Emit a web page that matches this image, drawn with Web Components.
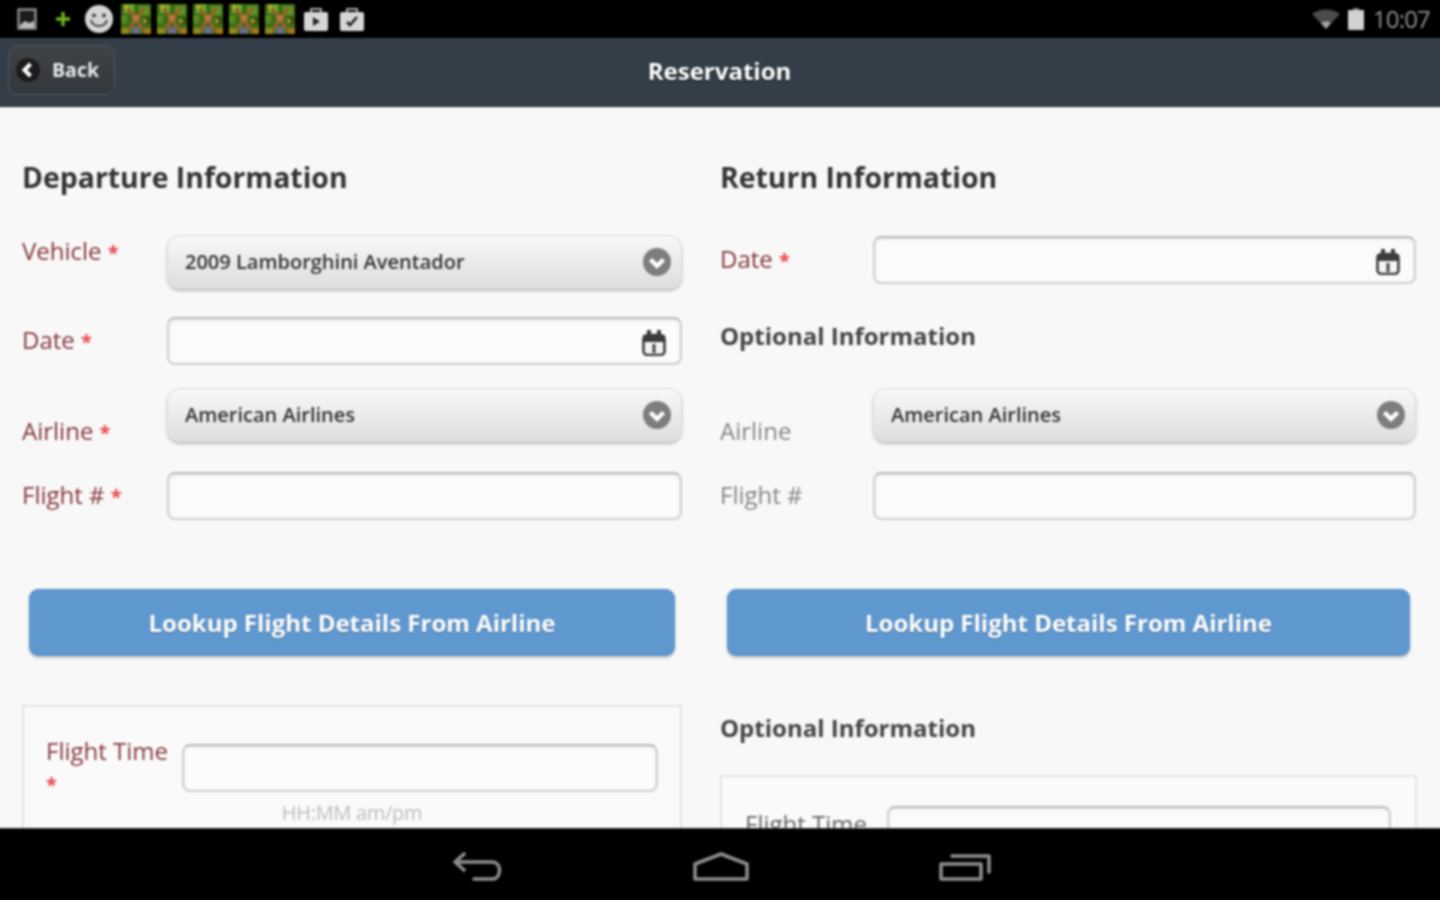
<!DOCTYPE html>
<html>
<head>
<meta charset="utf-8">
<title>Reservation</title>
<style>
  html, body { margin: 0; padding: 0; height: 100%; background: #000; }
  body { width: 1440px; height: 900px; overflow: hidden; font-family: "Open Sans", "Liberation Sans", sans-serif; }
  /* wider than the window so the blur has no dark edge at the sides */
  #app { display: flex; flex-direction: column; width: 1460px; height: 900px; margin-left: -10px; filter: blur(0.8px); }
</style>
</head>
<body>
<div id="app">
  <status-bar></status-bar>
  <title-bar>Reservation</title-bar>
  <reservation-page>
    <div slot="left">
      <section-heading>Departure Information</section-heading>
      <form-row label="Vehicle" required style="margin-top:38px" label-top="0" cols="145"><select-box>2009 Lamborghini Aventador</select-box></form-row>
      <form-row label="Date" required style="margin-top:28px" label-top="7" cols="145"><text-field calendar></text-field></form-row>
      <form-row label="Airline" required style="margin-top:23px" label-top="27" cols="145"><select-box>American Airlines</select-box></form-row>
      <form-row label="Flight #" required style="margin-top:23px" label-top="7" cols="145"><text-field></text-field></form-row>
      <lookup-button style="margin:69px 7px 0">Lookup Flight Details From Airline</lookup-button>
      <time-box required style="margin-top:49px" pad="37"></time-box>
    </div>
    <div slot="right">
      <section-heading>Return Information</section-heading>
      <form-row label="Date" required style="margin:39px 1px 0 0" label-top="7" cols="153"><text-field calendar></text-field></form-row>
      <sub-heading style="margin-top:35px">Optional Information</sub-heading>
      <form-row label="Airline" style="margin:35px 1px 0 0" label-top="27" cols="153"><select-box>American Airlines</select-box></form-row>
      <form-row label="Flight #" style="margin:25px 1px 0 0" label-top="7" cols="153"><text-field></text-field></form-row>
      <lookup-button style="margin:69px 7px 0">Lookup Flight Details From Airline</lookup-button>
      <sub-heading style="margin-top:55px">Optional Information</sub-heading>
      <time-box style="margin-top:30px" pad="29"></time-box>
    </div>
  </reservation-page>
  <nav-bar></nav-bar>
</div>

<script>
class StatusThumb extends HTMLElement {
  constructor() {
    super();
    this.attachShadow({mode: "open"}).innerHTML = `
      <style>:host { display: block; width: 30px; height: 30px; } svg { display: block; }</style>
      <svg width="30" height="30" viewBox="0 0 30 30">
        <rect width="30" height="30" fill="#3f6e18"/>
        <rect x="3" y="0" width="10" height="9" fill="#6ea52a"/>
        <rect x="18" y="2" width="10" height="9" fill="#5e9424"/>
        <rect x="0" y="11" width="6" height="8" fill="#568a20"/>
        <rect x="24" y="13" width="6" height="7" fill="#2f5412"/>
        <rect x="0" y="24" width="8" height="6" fill="#8f8a1c"/>
        <rect x="23" y="24" width="7" height="6" fill="#a3761c"/>
        <path d="M7 5 L15 15 L24 4 M15 15 L8 26 M15 15 L22 26" stroke="#94602c" stroke-width="3.5" fill="none"/>
        <rect x="11" y="23" width="8" height="7" fill="#6d6a84"/>
        <circle cx="15" cy="14" r="3.5" fill="#b8743c"/>
        <circle cx="5" cy="3" r="2" fill="#c9a82c"/>
        <circle cx="24" cy="17" r="2" fill="#c98a24"/>
      </svg>`;
  }
}
customElements.define("status-thumb", StatusThumb);

class StatusBar extends HTMLElement {
  constructor() {
    super();
    this.attachShadow({mode: "open"}).innerHTML = `
      <style>
        :host { display: flex; align-items: center; height: 38px; background: #000; padding-left: 27px; padding-right: 20px; flex: none; }
        svg { display: block; flex: none; }
        .thumbs { display: flex; gap: 6px; margin-left: 8px; }
        .right { margin-left: auto; display: flex; align-items: center; color: #8f8f8f; font-size: 24px; letter-spacing: -0.8px; }
        .right span { margin-left: 9px; margin-top: -1px; }
      </style>
      <svg width="20" height="22" viewBox="0 0 20 22"><rect x="1.5" y="1.5" width="17" height="19" fill="#1c1c1c" stroke="#8f8f8f" stroke-width="2.4"/><path d="M3 17 L8 13 L12 15 L17 13 L17 20 L3 20 Z" fill="#bbb"/></svg>
      <svg style="margin-left:18px" width="16" height="16" viewBox="0 0 16 16"><path d="M8 1 V15 M1 8 H15" stroke="#6fb018" stroke-width="3.4"/></svg>
      <svg style="margin-left:14px" width="28" height="28" viewBox="0 0 28 28"><circle cx="14" cy="14" r="14" fill="#d4d4d4"/><circle cx="9" cy="10.5" r="2" fill="#444"/><circle cx="19" cy="10.5" r="2" fill="#444"/><path d="M6 15 C8 23 20 23 22 15" stroke="#444" stroke-width="2" fill="none"/></svg>
      <div class="thumbs"><status-thumb></status-thumb><status-thumb></status-thumb><status-thumb></status-thumb><status-thumb></status-thumb><status-thumb></status-thumb></div>
      <svg style="margin-left:9px" width="24" height="24" viewBox="0 0 24 24"><path d="M7 6 V2 H17 V6" stroke="#aaa" stroke-width="2" fill="none"/><rect y="5" width="24" height="19" rx="2" fill="#d6d6d6"/><path d="M9 10 L16 14.5 L9 19 Z" fill="#222"/></svg>
      <svg style="margin-left:12px" width="24" height="24" viewBox="0 0 24 24"><path d="M7 6 V2 H17 V6" stroke="#aaa" stroke-width="2" fill="none"/><rect y="5" width="24" height="19" rx="2" fill="#d6d6d6"/><path d="M7 15 L10 18 L17 10" stroke="#222" stroke-width="2.6" fill="none"/></svg>
      <div class="right">
        <svg width="28" height="20" viewBox="0 0 28 20"><path d="M0 5 C8 -1 20 -1 28 5 L14 20 Z" fill="#4a4a4a"/><path d="M9 14 C12 12 16 12 19 14 L14 20 Z" fill="#a5a5a5"/></svg>
        <svg style="margin-left:8px" width="16" height="22" viewBox="0 0 16 22"><rect x="5" y="0" width="6" height="3" fill="#777"/><rect y="2" width="16" height="20" rx="1" fill="#d2d2d2"/></svg>
        <span>10:07</span>
      </div>`;
  }
}
customElements.define("status-bar", StatusBar);

class TitleBar extends HTMLElement {
  constructor() {
    super();
    this.attachShadow({mode: "open"}).innerHTML = `
      <style>
        :host { display: grid; grid-template-columns: 1fr auto 1fr; align-items: center; height: 69px; flex: none; background: #333e48; color: #fff; border-bottom: 1px solid #222; box-sizing: border-box; padding: 0 10px 0 18px; }
        .back { justify-self: start; display: flex; align-items: center; width: 107px; height: 50px; box-sizing: border-box; margin-top: -5px; padding-left: 7px; gap: 12px; border-radius: 10px; background: linear-gradient(#3f4347, #34383c); border: 1px solid #50565e; font-size: 19.5px; font-weight: 700; color: #e8e8e8; }
        .back svg { display: block; }
        .title { font-size: 24px; font-weight: 700; text-shadow: 0 1px 1px #000; margin-left: -9px; margin-top: -4px; }
      </style>
      <div class="back">
        <svg width="24" height="24" viewBox="0 0 24 24"><circle cx="12" cy="12" r="12" fill="#1b1b1b"/><path d="M14.5 6 L8.5 12 L14.5 18" stroke="#fff" stroke-width="4" fill="none"/></svg>
        <span>Back</span>
      </div>
      <div class="title"><slot></slot></div>`;
  }
}
customElements.define("title-bar", TitleBar);

class ReservationPage extends HTMLElement {
  constructor() {
    super();
    this.attachShadow({mode: "open"}).innerHTML = `
      <style>
        :host { display: grid; grid-template-columns: 660px 697px; column-gap: 38px; padding: 50px 33px 0 32px; flex: 1; min-height: 0; overflow: hidden; background: #f8f8f8; }
      </style>
      <slot name="left"></slot>
      <slot name="right"></slot>`;
  }
}
customElements.define("reservation-page", ReservationPage);

class SectionHeading extends HTMLElement {
  constructor() {
    super();
    this.attachShadow({mode: "open"}).innerHTML = `
      <style>:host { display: block; height: 40px; line-height: 40px; font-size: 28.4px; font-weight: 700; color: #333; }</style>
      <slot></slot>`;
  }
}
customElements.define("section-heading", SectionHeading);

class SubHeading extends HTMLElement {
  constructor() {
    super();
    this.attachShadow({mode: "open"}).innerHTML = `
      <style>:host { display: block; height: 34px; line-height: 34px; font-size: 24px; font-weight: 700; color: #444; }</style>
      <slot></slot>`;
  }
}
customElements.define("sub-heading", SubHeading);

class FormRow extends HTMLElement {
  constructor() {
    super();
    const req = this.hasAttribute("required");
    this.attachShadow({mode: "open"}).innerHTML = `
      <style>
        :host { display: grid; grid-template-columns: ${this.getAttribute("cols")}px 1fr; align-items: start; }
        .label { padding-top: ${this.getAttribute("label-top")}px; line-height: 32px; font-size: 24px; color: ${req ? "#85363d" : "#858585"}; }
        .star { color: #e8474c; font-size: 20px; font-weight: 700; }
      </style>
      <div class="label">${this.getAttribute("label")}${req ? ' <span class="star">*</span>' : ""}</div>
      <div><slot></slot></div>`;
  }
}
customElements.define("form-row", FormRow);

class SelectBox extends HTMLElement {
  constructor() {
    super();
    this.attachShadow({mode: "open"}).innerHTML = `
      <style>
        :host { display: flex; align-items: center; justify-content: space-between; height: 54px; box-sizing: border-box; padding: 0 10px 0 17px; border-radius: 13px; border: 1px solid #dcdcdc; background: linear-gradient(#f8f8f8, #dedede); box-shadow: 0 2px 3px rgba(0,0,0,.25); font-size: 20px; font-weight: 600; color: #333; }
        span { margin-top: -2px; }
        svg { display: block; flex: none; }
      </style>
      <span><slot></slot></span>
      <svg width="28" height="28" viewBox="0 0 28 28"><circle cx="14" cy="14" r="14" fill="#7d7d7d"/><path d="M7.5 11.5 L14 18 L20.5 11.5" stroke="#fff" stroke-width="4.4" fill="none"/></svg>`;
  }
}
customElements.define("select-box", SelectBox);

class TextField extends HTMLElement {
  constructor() {
    super();
    const cal = this.hasAttribute("calendar");
    this.attachShadow({mode: "open"}).innerHTML = `
      <style>
        :host { display: flex; align-items: center; justify-content: flex-end; height: 48px; box-sizing: border-box; padding-right: 14px; border-radius: 8px; border: 2px solid #cfcfcf; border-top-color: #bcbcbc; background: #fbfbfb; box-shadow: inset 0 1px 3px rgba(0,0,0,.12); }
        svg { display: block; margin-top: 3px; }
      </style>
      ${cal ? `<svg width="24" height="26" viewBox="0 0 24 26"><rect x="1.5" y="5" width="21" height="20" rx="4" fill="#f4f4f4" stroke="#3c3c3c" stroke-width="2.6"/><rect x="1" y="5" width="22" height="7" fill="#3c3c3c"/><rect x="5" y="0" width="4" height="7" fill="#3c3c3c"/><rect x="15" y="0" width="4" height="7" fill="#3c3c3c"/><path d="M12 14 V23" stroke="#444" stroke-width="3"/></svg>` : ""}`;
  }
}
customElements.define("text-field", TextField);

class LookupButton extends HTMLElement {
  constructor() {
    super();
    this.attachShadow({mode: "open"}).innerHTML = `
      <style>
        :host { display: flex; align-items: center; justify-content: center; height: 67px; border-radius: 9px; background: #5f98cf; border: 1px solid #5a8fc4; box-sizing: border-box; box-shadow: 0 2px 3px rgba(0,0,0,.2); color: #fff; font-size: 24px; font-weight: 700; text-shadow: 0 1px 1px rgba(0,0,0,.35); }
      </style>
      <slot></slot>`;
  }
}
customElements.define("lookup-button", LookupButton);

class TimeBox extends HTMLElement {
  constructor() {
    super();
    const req = this.hasAttribute("required");
    this.attachShadow({mode: "open"}).innerHTML = `
      <style>
        :host { display: block; box-sizing: border-box; border: 2px solid #e4e4e4; padding: ${this.getAttribute("pad")}px ${req ? 22 : 24}px 0 ${req ? 22 : 23}px; height: 200px; background: #fafafa; }
        .row { display: grid; grid-template-columns: ${req ? 136 : 142}px 1fr; }
        .label { font-size: 24px; line-height: 32px; color: ${req ? "#85363d" : "#666"}; width: 128px; height: 48px; ${req ? "margin-top: -9px;" : "padding-top: 2px;"} }
        .star { color: #e8474c; font-size: 20px; font-weight: 700; display: block; margin-top: 2px; }
        .hint { text-align: center; font-size: 20px; line-height: 24px; letter-spacing: -0.3px; color: #bdbdbd; margin-top: 9px; }
      </style>
      <div class="row">
        <div class="label">Flight Time${req ? '<span class="star">*</span>' : ""}</div>
        <text-field></text-field>
      </div>
      ${req ? '<div class="hint">HH:MM am/pm</div>' : ""}`;
  }
}
customElements.define("time-box", TimeBox);

class NavBar extends HTMLElement {
  constructor() {
    super();
    this.attachShadow({mode: "open"}).innerHTML = `
      <style>
        :host { display: flex; align-items: center; height: 72px; flex: none; background: #000; border-top: 1px solid #333; box-sizing: border-box; padding-left: 462px; padding-top: 4px; }
        svg { display: block; fill: none; stroke: #8c8c8c; stroke-width: 3.6; stroke-linejoin: round; stroke-linecap: round; }
      </style>
      <svg width="50" height="30" viewBox="0 0 50 30"><path d="M12 2 L3 10 L12 18 M3 10 H40 C50 10 50 27 40 27 H22"/></svg>
      <svg style="margin-left:190px" width="58" height="30" viewBox="0 0 58 30"><path d="M3 27 H55 V12 L29 2 L3 12 Z"/></svg>
      <svg style="margin-left:189px" width="52" height="30" viewBox="0 0 52 30"><rect x="2" y="12" width="40" height="15"/><path d="M13 4 H50 V20"/></svg>`;
  }
}
customElements.define("nav-bar", NavBar);
</script>
</body>
</html>
